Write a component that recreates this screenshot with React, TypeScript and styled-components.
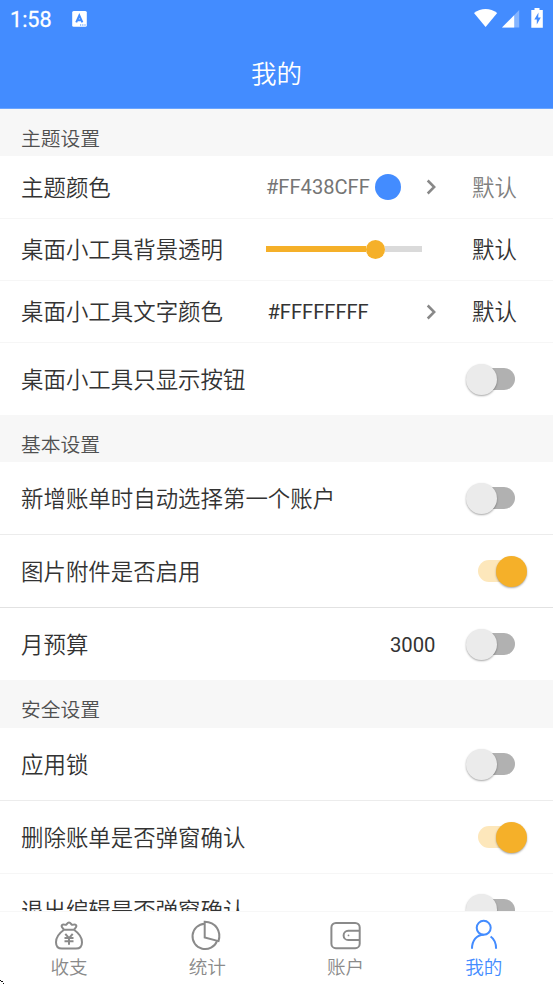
import React from "react";
import styled, { createGlobalStyle } from "styled-components";

const BLUE = "#438cff";
const AMBER = "#f5b029";

const GlobalStyle = createGlobalStyle`
  * { box-sizing: border-box; }
  body { margin: 0; background: #fff; }
`;

const Screen = styled.div`
  width: 553px;
  height: 984px;
  display: flex;
  flex-direction: column;
  overflow: hidden;
  background: #fff;
  color: #333;
  font-family: Roboto, "Noto Sans CJK SC", sans-serif;
  font-weight: 350;
  font-size: 22.45px;
  white-space: nowrap;
`;

const Header = styled.header`
  flex: none;
  height: 109px;
  background: ${BLUE};
  color: #fff;
  border-bottom: 1px solid #6ba5ff;
`;

const StatusBar = styled.div`
  height: 37px;
  display: flex;
  align-items: center;
  padding: 1px 9px 0 10px;
`;

const Clock = styled.span`
  width: 62px;
  font-size: 21.6px;
  font-weight: 400;
  line-height: 36px;
  padding-top: 1px;
  -webkit-text-stroke: 0.3px #fff;
`;

const StatusIcons = styled.svg`
  display: block;
  margin-left: auto;
`;

const Title = styled.h1`
  margin: 0;
  height: 71px;
  padding-top: 1px;
  line-height: 72px;
  font-size: 25.5px;
  font-weight: 350;
  text-align: center;
`;

const Content = styled.main`
  flex: 1;
  min-height: 0;
  overflow: hidden;
`;

const SectionTitle = styled.h2<{ $height?: number }>`
  margin: 0;
  height: ${(p) => p.$height ?? 47}px;
  padding: 8px 0 0 21px;
  background: #f7f7f7;
  color: #505050;
  font-size: 19.8px;
  font-weight: 350;
  line-height: 46px;
`;

const Row = styled.div<{ $height: number; $line?: string }>`
  display: flex;
  align-items: center;
  height: ${(p) => p.$height}px;
  padding-left: 21px;
  border-bottom: ${(p) => (p.$line ? `1px solid ${p.$line}` : "none")};
`;

const Label = styled.span<{ $drop?: number }>`
  width: 245px;
  padding-top: ${(p) => p.$drop ?? 0}px;
  line-height: 32px;
`;

const Value = styled.div<{ $muted?: boolean; $indent?: number }>`
  display: flex;
  align-items: center;
  width: 160px;
  padding-left: ${(p) => p.$indent ?? 0}px;
  font-size: 20.1px;
  font-weight: 400;
  color: ${(p) => (p.$muted ? "#757575" : "#333")};
`;

const Swatch = styled.span`
  width: 26px;
  height: 26px;
  margin: -1px 0 0 5px;
  border-radius: 50%;
  background: ${BLUE};
`;

const Arrow = styled.svg`
  display: block;
  width: 12px;
  height: 18px;
  margin-right: 34px;
`;

const Spacer = styled.span`
  width: 46px;
`;

const Reset = styled.button<{ $muted?: boolean; $drop?: number }>`
  padding: ${(p) => p.$drop ?? 0}px 0 0;
  border: 0;
  background: none;
  font: inherit;
  line-height: 32px;
  color: ${(p) => (p.$muted ? "#808080" : "#333")};
`;

const Slider = styled.div`
  display: flex;
  align-items: center;
  width: 156px;
  height: 20px;
  margin-top: -1px;
`;

const SliderFill = styled.span`
  width: 100px;
  height: 6px;
  background: ${AMBER};
`;

const SliderThumb = styled.span`
  width: 19px;
  height: 19px;
  border-radius: 50%;
  background: ${AMBER};
`;

const SliderRest = styled.span`
  flex: 1;
  height: 6px;
  background: #dadada;
`;

const Amount = styled.span`
  margin-right: 42.5px;
  padding-top: 1px;
  font-size: 20.3px;
  font-weight: 400;
`;

const SwitchTrack = styled.span<{ $on?: boolean }>`
  display: flex;
  align-items: center;
  flex: none;
  width: 37px;
  height: 22px;
  margin-left: auto;
  margin-right: 38px;
  border-radius: 11px;
  background: ${(p) => (p.$on ? "#fde7bb" : "#b1b1b1")};
`;

const SwitchThumb = styled.span<{ $on?: boolean }>`
  flex: none;
  width: 31px;
  height: 31px;
  margin-left: ${(p) => (p.$on ? 18 : -12)}px;
  border-radius: 50%;
  background: ${(p) => (p.$on ? AMBER : "#ebebeb")};
  box-shadow: 0 1px 2px rgba(0, 0, 0, 0.35);
`;

const AmountSwitch = styled.div`
  display: flex;
  align-items: center;
  margin-left: auto;
`;

const TabBar = styled.nav`
  flex: none;
  display: grid;
  grid-template-columns: repeat(4, 1fr);
  height: 73px;
  border-top: 1px solid #f7f7f7;
  background: #fff;
`;

const Tab = styled.div<{ $active?: boolean }>`
  display: flex;
  flex-direction: column;
  align-items: center;
  padding-top: 6px;
  color: ${(p) => (p.$active ? BLUE : "#8a8a8a")};
  font-size: 18.6px;
  line-height: 33px;
`;

const TabIcon = styled.svg`
  display: block;
  width: 36px;
  height: 34px;
  fill: none;
  stroke: currentColor;
  stroke-width: 2;
`;

const Corner = styled.svg`
  position: absolute;
  left: 0;
  top: 979px;
`;

function Chevron() {
  return (
    <Arrow viewBox="0 0 12 18" fill="none" stroke="#888" strokeWidth="2.5">
      <path d="M1.7 2.5 8.2 9l-6.5 6.5" />
    </Arrow>
  );
}

function Switch({ on }: { on?: boolean }) {
  return (
    <SwitchTrack $on={on}>
      <SwitchThumb $on={on} />
    </SwitchTrack>
  );
}

function ToggleRow({ label, on, line, height = 73 }: { label: string; on?: boolean; line?: string; height?: number }) {
  return (
    <Row $height={height} $line={line}>
      <Label $drop={2}>{label}</Label>
      <Switch on={on} />
    </Row>
  );
}

export default function App() {
  return (
    <Screen>
      <GlobalStyle />
      <Header>
        <StatusBar>
          <Clock>1:58</Clock>
          <svg width="16" height="17" viewBox="0 0 16 17">
            <rect x="0.2" y="0" width="14.6" height="15.8" rx="1.5" fill="#fff" />
            <path d="M4.2 11.3 7.3 4.5 10.4 11.3M5.4 9.3h3.9" fill="none" stroke={BLUE} strokeWidth="2" />
            <path d="M8 14h1.2M10.2 14h1.2M12.4 14h1.2" stroke={BLUE} strokeWidth="1.2" />
          </svg>
          <StatusIcons width="70" height="22" viewBox="0 0 70 22">
            <path d="M0 5C7-.3 16.2-.3 23.2 5L11.6 19Z" fill="#fff" />
            <path d="M28 19.5 45.2 2V19.5Z" fill="#fff" fillOpacity=".35" />
            <path d="M28 19.5 40.2 7.2V19.5Z" fill="#fff" />
            <path d="M60.5 0h5v2h3.3V19.8H57.3V2h3.2z" fill="#fff" />
            <path d="m64.5 4.6-4.2 7h2.5v5l4-7.1h-2.6z" fill={BLUE} />
          </StatusIcons>
        </StatusBar>
        <Title>我的</Title>
      </Header>

      <Content>
        <SectionTitle>主题设置</SectionTitle>
        <Row $height={63} $line="#f6f6f6">
          <Label $drop={2}>主题颜色</Label>
          <Value $muted>#FF438CFF<Swatch /></Value>
          <Chevron />
          <Reset $muted $drop={2}>默认</Reset>
        </Row>
        <Row $height={62} $line="#f6f6f6">
          <Label>桌面小工具背景透明</Label>
          <Value>
            <Slider>
              <SliderFill />
              <SliderThumb />
              <SliderRest />
            </Slider>
          </Value>
          <Spacer />
          <Reset>默认</Reset>
        </Row>
        <Row $height={62} $line="#f6f6f6">
          <Label>桌面小工具文字颜色</Label>
          <Value $indent={1.5}>#FFFFFFFF</Value>
          <Chevron />
          <Reset>默认</Reset>
        </Row>
        <ToggleRow label="桌面小工具只显示按钮" height={72} />

        <SectionTitle>基本设置</SectionTitle>
        <ToggleRow label="新增账单时自动选择第一个账户" line="#ececec" />
        <ToggleRow label="图片附件是否启用" on line="#e2e2e2" />
        <Row $height={72}>
          <Label $drop={2}>月预算</Label>
          <AmountSwitch>
            <Amount>3000</Amount>
            <Switch />
          </AmountSwitch>
        </Row>

        <SectionTitle $height={48}>安全设置</SectionTitle>
        <ToggleRow label="应用锁" line="#ececec" />
        <ToggleRow label="删除账单是否弹窗确认" on line="#f6f6f6" />
        <ToggleRow label="退出编辑是否弹窗确认" height={71} />
      </Content>

      <TabBar>
        <Tab>
          <TabIcon viewBox="0 0 36 34">
            <path d="M13 11.8c-1-2-3.6-3.3-1.9-4.9 1.4-1.3 2.6.2 3.8-.1 1.1-.3 1.2-2.3 3.1-2.3s2 2 3.1 2.3c1.2.3 2.4-1.2 3.8.1 1.7 1.6-.9 2.9-1.9 4.9ZM13 11.8c-4.2 3-8 7.7-8 12.4 0 4.8 2.2 6.4 6 6.4h14c3.8 0 6-1.6 6-6.4 0-4.7-3.8-9.4-8-12.4" />
            <path d="m14.3 15.8 3.7 4.3 3.7-4.3M13.5 20h9M13.5 23.3h9M18 20v6.8" />
          </TabIcon>
          收支
        </Tab>
        <Tab>
          <TabIcon viewBox="0 0 36 34">
            <path d="M15.7 5.7A12.7 12.7 0 1 0 28 23.1" />
            <path d="M15.7 3.7v15.8l13.8 3.6c3-9.4-2.6-19.3-13.8-19.4Z" />
          </TabIcon>
          统计
        </Tab>
        <Tab>
          <TabIcon viewBox="1 0 36 34">
            <rect x="4.4" y="5" width="28.3" height="25.2" rx="4.5" />
            <path d="M32.7 12.8H21.2a4.6 4.6 0 0 0 0 9.2h11.5" />
            <circle cx="21.5" cy="17.4" r=".9" fill="currentColor" stroke="none" />
          </TabIcon>
          账户
        </Tab>
        <Tab $active>
          <TabIcon viewBox="0 0 36 34">
            <circle cx="17.7" cy="9.8" r="7" />
            <path d="M6 30.7c0-8.1 4.6-13.9 11.7-13.9M24.6 18.5c3.6 2.5 5.5 6.8 5.5 12.2" />
          </TabIcon>
          我的
        </Tab>
      </TabBar>
      <Corner width="5" height="5" viewBox="0 0 5 5" shapeRendering="crispEdges">
        <path d="M0 1h1v1H0zM1 2h1v1H1zM2 2h1v1H2zM3 4h1v1H3z" fill="#111" />
      </Corner>
    </Screen>
  );
}
